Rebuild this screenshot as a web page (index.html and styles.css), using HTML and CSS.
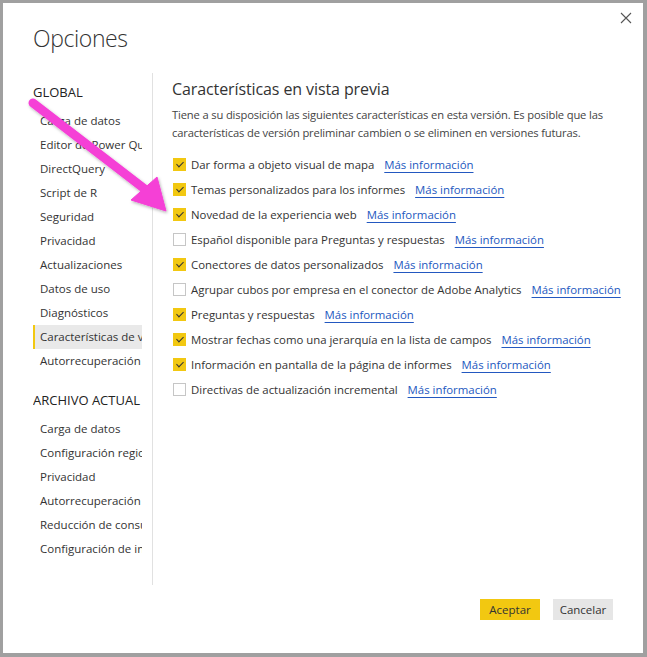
FILE: index.html
```html
<!DOCTYPE html>
<html lang="es">
<head>
<meta charset="utf-8">
<title>Opciones</title>
<link rel="stylesheet" href="styles.css">
</head>
<body>
<div class="dialog">
  <button class="close" aria-label="Cerrar">
    <svg width="12" height="12" viewBox="0 0 12 12"><path d="M1 1 L11 11 M11 1 L1 11" stroke="#555" stroke-width="1.1" fill="none"/></svg>
  </button>
  <h1 class="title">Opciones</h1>
  <div class="body">
    <nav class="nav">
      <div class="nav-head">GLOBAL</div>
      <div class="nav-item">Carga de datos</div>
      <div class="nav-item">Editor de Power Query</div>
      <div class="nav-item">DirectQuery</div>
      <div class="nav-item">Script de R</div>
      <div class="nav-item">Seguridad</div>
      <div class="nav-item">Privacidad</div>
      <div class="nav-item">Actualizaciones</div>
      <div class="nav-item">Datos de uso</div>
      <div class="nav-item">Diagnósticos</div>
      <div class="nav-item selected">Características de vista previa</div>
      <div class="nav-item">Autorrecuperación</div>
      <div class="nav-head second">ARCHIVO ACTUAL</div>
      <div class="nav-item">Carga de datos</div>
      <div class="nav-item">Configuración regional</div>
      <div class="nav-item">Privacidad</div>
      <div class="nav-item">Autorrecuperación</div>
      <div class="nav-item">Reducción de consultas</div>
      <div class="nav-item">Configuración de informe</div>
    </nav>
    <section class="content">
      <h2 class="heading">Características en vista previa</h2>
      <p class="desc">Tiene a su disposición las siguientes características en esta versión. Es posible que las características de versión preliminar cambien o se eliminen en versiones futuras.</p>
      <ul class="features">
        <li class="row"><span class="cb on"></span><span class="label">Dar forma a objeto visual de mapa</span><a class="link">Más información</a></li>
        <li class="row"><span class="cb on"></span><span class="label">Temas personalizados para los informes</span><a class="link">Más información</a></li>
        <li class="row"><span class="cb on"></span><span class="label">Novedad de la experiencia web</span><a class="link">Más información</a></li>
        <li class="row"><span class="cb"></span><span class="label">Español disponible para Preguntas y respuestas</span><a class="link">Más información</a></li>
        <li class="row"><span class="cb on"></span><span class="label">Conectores de datos personalizados</span><a class="link">Más información</a></li>
        <li class="row"><span class="cb"></span><span class="label">Agrupar cubos por empresa en el conector de Adobe Analytics</span><a class="link">Más información</a></li>
        <li class="row"><span class="cb on"></span><span class="label">Preguntas y respuestas</span><a class="link">Más información</a></li>
        <li class="row"><span class="cb on"></span><span class="label">Mostrar fechas como una jerarquía en la lista de campos</span><a class="link">Más información</a></li>
        <li class="row"><span class="cb on"></span><span class="label">Información en pantalla de la página de informes</span><a class="link">Más información</a></li>
        <li class="row"><span class="cb"></span><span class="label">Directivas de actualización incremental</span><a class="link">Más información</a></li>
      </ul>
    </section>
  </div>
  <div class="footer">
    <button class="btn primary">Aceptar</button>
    <button class="btn">Cancelar</button>
  </div>
  <svg class="arrow" width="200" height="230" viewBox="0 0 200 230">
    <defs>
      <filter id="sh" x="-20%" y="-20%" width="140%" height="140%">
        <feDropShadow dx="1" dy="1.5" stdDeviation="1.5" flood-color="#000" flood-opacity="0.3"/>
      </filter>
    </defs>
    <g filter="url(#sh)" fill="#f53fd6" stroke="#f53fd6">
      <line x1="33" y1="103" x2="146" y2="190" stroke-width="9" stroke-linecap="round"/>
      <polygon points="166,211 131,200 157,177" stroke-width="1" stroke-linejoin="round"/>
    </g>
  </svg>
</div>
</body>
</html>
```

FILE: styles.css
```css
* { box-sizing: border-box; }
html, body { margin: 0; padding: 0; background: #a0a0a0; }
body {
  font-family: "Segoe UI", "Open Sans", "Noto Sans", sans-serif;
  color: #333;
}
.dialog {
  position: relative;
  width: 647px;
  height: 657px;
  background: #fff;
  border-style: solid;
  border-color: #a0a0a0;
  border-width: 3px 4px 4px 3px;
  display: flex;
  flex-direction: column;
}
.close {
  position: absolute;
  top: 8px;
  right: 10px;
  width: 14px;
  height: 14px;
  padding: 0;
  border: 0;
  background: none;
  display: flex;
  align-items: center;
  justify-content: center;
}
.title {
  margin: 18px 0 0 30px;
  font-size: 23px;
  font-weight: 300;
  letter-spacing: -0.4px;
  line-height: 34px;
  color: #333;
  height: 34px;
}
.body {
  display: flex;
  margin-top: 18px;
  height: 512px;
}
.nav {
  width: 150px;
  padding: 7px 10px 0 30px;
  border-right: 1px solid #e1e1e1;
  font-size: 11.5px;
}
.nav-head {
  height: 24px;
  line-height: 24px;
  font-size: 13px;
  color: #222;
  margin-bottom: 5px;
  white-space: nowrap;
  overflow: hidden;
}
.nav-head.second { margin-top: 15px; }
.nav-item {
  height: 24px;
  line-height: 24px;
  padding-left: 5px;
  border-left: 2px solid transparent;
  white-space: nowrap;
  overflow: hidden;
  color: #333;
}
.nav-item.selected {
  background: #e9e9e9;
  border-left-color: #f2c811;
}
.content {
  flex: 1;
  padding: 4px 18px 0 19px;
}
.heading {
  margin: 0;
  font-size: 16px;
  font-weight: 400;
  letter-spacing: -0.1px;
  line-height: 24px;
  color: #333;
}
.desc {
  margin: 5px 0 0;
  font-size: 11.2px;
  letter-spacing: -0.15px;
  line-height: 18px;
  color: #444;
}
.features {
  list-style: none;
  margin: 10px 0 0;
  padding: 0;
}
.row {
  display: flex;
  align-items: center;
  height: 25px;
  font-size: 11.4px;
  white-space: nowrap;
}
.cb {
  width: 13px;
  height: 13px;
  margin-left: 1px;
  border: 1px solid #c6c6c6;
  background: #fff;
  flex: none;
  position: relative;
}
.cb.on {
  background: #f2c811;
  border-color: #f2c811;
}
.cb.on::after {
  content: "";
  position: absolute;
  left: 3.5px;
  top: 1px;
  width: 3px;
  height: 6px;
  border: solid #333;
  border-width: 0 1.6px 1.6px 0;
  transform: rotate(45deg);
}
.label {
  margin-left: 5px;
  color: #333;
}
.link {
  margin-left: 10px;
  color: #2358c0;
  text-decoration: underline;
  text-underline-offset: 3px;
  text-decoration-thickness: 1px;
}
.footer {
  display: flex;
  justify-content: flex-end;
  gap: 13px;
  padding: 14px 30px 0 0;
}
.btn {
  width: 60px;
  height: 21px;
  padding: 0;
  border: 0;
  background: #e6e6e6;
  font-family: inherit;
  font-size: 11.5px;
  color: #333;
}
.btn.primary { background: #f2c811; }
.arrow {
  position: absolute;
  left: -3px;
  top: -3px;
  pointer-events: none;
}
```
